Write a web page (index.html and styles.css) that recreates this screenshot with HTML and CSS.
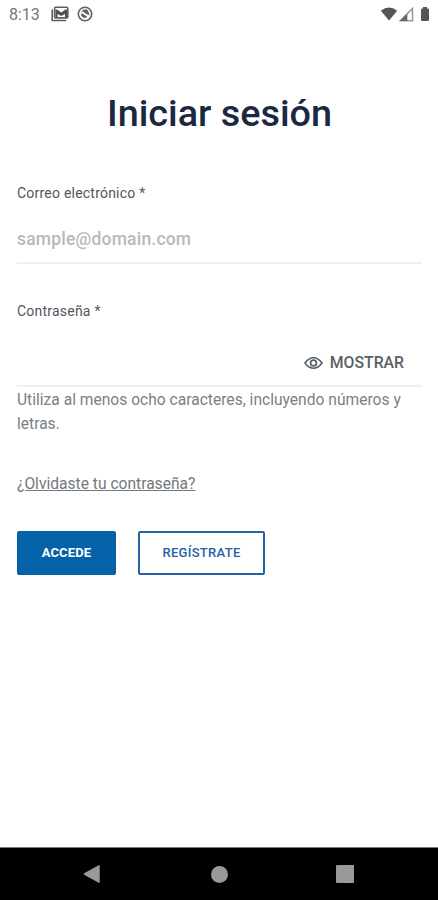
FILE: index.html
```html
<!DOCTYPE html>
<html lang="es">
<head>
<meta charset="utf-8">
<title>Iniciar sesión</title>
<link rel="stylesheet" href="styles.css">
</head>
<body>
<div class="screen">
  <header class="status">
    <span class="clock">8:13</span>
    <svg class="mail" width="18" height="16" viewBox="0 0 18 16"><path d="M1.200 3.500v11h14" fill="none" stroke="#606060" stroke-width="1.600"/><rect x="3.600" y="1.300" width="13.200" height="10.600" rx="1" fill="#fff" stroke="#606060" stroke-width="1.600"/><path d="M4.500 11.500V3.500h1.500L10.200 6.500 14.500 3.500H16v8h-2V8l-3.800 2L6.500 8v3.500z" fill="#505050"/></svg>
    <svg class="sync" width="16" height="16" viewBox="0 0 16 16"><circle cx="8" cy="8" r="6.700" fill="none" stroke="#606060" stroke-width="1.600"/><path d="M4 7a4.200 4.200 0 0 1 7-2.200L12.300 9 9.800 8 5 4.800M4 8.800A4 4 0 0 0 10 11L5.300 7.600z" fill="#606060" stroke="#606060" stroke-width=".4"/></svg>
    <span class="spacer"></span>
    <svg class="wifi" width="18" height="14" viewBox="0 0 18 14"><path d="M.8 3.800Q9-2.600 17.200 3.800L9 13.500z" fill="#555"/></svg>
    <svg class="signal" width="15" height="15" viewBox="0 0 15 15"><path d="M1.200 13.700L13.500 1.400v12.300z" fill="#fff" stroke="#999" stroke-width="1.500"/><path d="M.8 14L8.300 6.500V14z" fill="#666"/></svg>
    <svg class="battery" width="10" height="14" viewBox="0 0 10 14"><path d="M3 0h4v1.500h1q1 0 1 1V13q0 1-1 1H2q-1 0-1-1V2.500q0-1 1-1h1z" fill="#555"/></svg>
  </header>
  <main class="content">
    <h1 class="title">Iniciar sesión</h1>
    <form class="form">
      <label class="label" for="email">Correo electrónico *</label>
      <div class="field field-email">
        <input class="input" id="email" type="text" placeholder="sample@domain.com">
      </div>
      <label class="label" for="password">Contraseña *</label>
      <div class="field field-password">
        <input class="input" id="password" type="password">
        <span class="show">
          <svg width="19" height="14" viewBox="0 0 20 14" fill="none" stroke="#596167"><path d="M1 7Q5.200 1.500 10 1.500T19 7Q14.800 12.500 10 12.500T1 7z" stroke-width="1.700"/><circle cx="10" cy="7" r="3.100" stroke-width="1.800"/></svg>
          <span class="show-text">MOSTRAR</span>
        </span>
      </div>
      <p class="hint">Utiliza al menos ocho caracteres, incluyendo números y letras.</p>
      <a class="forgot">¿Olvidaste tu contraseña?</a>
      <div class="actions">
        <button class="btn primary" type="button">ACCEDE</button>
        <button class="btn outline" type="button">REGÍSTRATE</button>
      </div>
    </form>
  </main>
  <nav class="nav">
    <svg width="18" height="20" viewBox="0 0 18 20"><path d="M1.500 10L16 2v16z" fill="#999" stroke="#999" stroke-width="1.500" stroke-linejoin="round"/></svg>
    <span class="home"></span>
    <span class="recent"></span>
  </nav>
</div>
</body>
</html>
```

FILE: styles.css
```css
* { box-sizing: border-box; }
body { margin: 0; background: #fff; font-family: Roboto, "Liberation Sans", sans-serif; }
svg { display: block; flex: none; }
.screen { width: 438px; height: 900px; display: flex; flex-direction: column; overflow: hidden; }
.status { height: 28px; padding: 0 8px 0 9px; display: flex; align-items: center; }
.clock { width: 42px; font-size: 16px; line-height: 28px; color: #777; padding-top: 1px; }
.sync { margin-left: 8px; }
.spacer { flex: 1; }
.signal { margin-left: 1px; }
.battery { margin-left: 6px; }
.content { flex: 1; padding: 0 17px; }
.title { margin: 61px 0 0; height: 48px; line-height: 48px; font-size: 37.8px; font-weight: 500; color: #1b2841; text-align: center; white-space: nowrap; padding-left: 1px; }
.form { padding-top: 46px; }
.label { display: block; height: 20px; line-height: 20px; font-size: 14px; letter-spacing: .22px; color: #505660; }
.field { display: flex; align-items: center; border-bottom: 2px solid #f0f0f0; width: 405px; }
.field-email { height: 61px; margin-bottom: 37px; padding-top: 12px; }
.field-password { height: 66px; padding: 20px 18px 0 0; }
.input { flex: 1; min-width: 0; height: 30px; border: 0; padding: 0; outline: 0; background: none; font: 500 17.5px/30px Roboto, sans-serif; letter-spacing: .2px; }
.input::placeholder { color: #b7b9ba; opacity: 1; }
.show { display: flex; align-items: center; gap: 7px; color: #596167; }
.show-text { font-size: 15.8px; font-weight: 500; line-height: 24px; }
.hint { margin: 0; padding-top: 1px; width: 405px; font-size: 15.6px; line-height: 24px; color: #7b8084; }
.forgot { display: block; width: max-content; margin-top: 36px; height: 24px; line-height: 24px; font-size: 15.6px; color: #73787d; text-decoration: underline; }
.actions { display: flex; gap: 22px; margin-top: 35px; }
.btn { height: 44px; border: 2px solid #0562a8; border-radius: 2px; padding: 0; font: 500 13px/38px Roboto, sans-serif; }
.primary { width: 99px; background: #0562a8; color: #fff; font-weight: 700; letter-spacing: .15px; }
.outline { width: 127px; background: #fff; color: #2860a5; border-color: #2462a6; letter-spacing: .3px; }
.nav { flex: none; height: 53px; background: #000; border-top: 1px solid #777; display: flex; align-items: center; padding-left: 83px; }
.home { width: 17px; height: 17px; border-radius: 50%; background: #999; margin-left: 110px; }
.recent { width: 18px; height: 18px; border-radius: 1px; background: #999; margin-left: 108px; }
```
